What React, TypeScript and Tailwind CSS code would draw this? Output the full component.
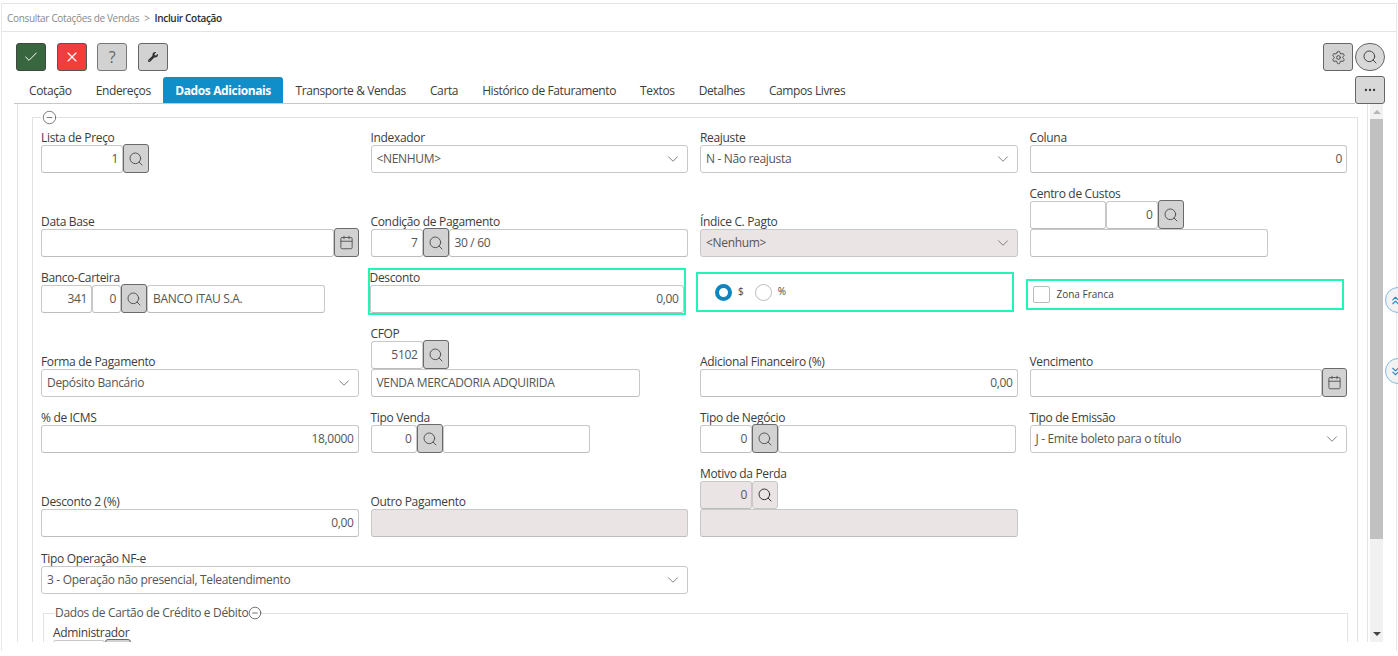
import type { ReactNode } from 'react';
import { Calendar, Check, ChevronDown, ChevronsDown, ChevronsUp, CircleMinus, Ellipsis, Search, Settings, X } from 'lucide-react';
import { FaWrench } from 'react-icons/fa';

const tabs = ['Cotação', 'Endereços', 'Dados Adicionais', 'Transporte & Vendas', 'Carta', 'Histórico de Faturamento', 'Textos', 'Detalhes', 'Campos Livres'];

function Label({ children }: { children: ReactNode }) {
  return <div className="h-[14px] text-[12px] leading-[14px] text-[#3c3c3c] whitespace-nowrap">{children}</div>;
}

function Input({ value, right, disabled, className = 'flex-1' }: { value?: string; right?: boolean; disabled?: boolean; className?: string }) {
  return (
    <div className={`flex h-[28px] items-center rounded-[3px] border border-[#c8c8c8] border-b-[#bcbcbc] pl-[5px] pr-[4px] text-[12px] text-[#555] whitespace-nowrap ${right ? 'justify-end' : ''} ${disabled ? 'bg-[#ebe4e4]' : 'bg-white'} ${className}`}>
      {value}
    </div>
  );
}

function Select({ value, disabled }: { value: string; disabled?: boolean }) {
  return (
    <div className={`flex h-[28px] items-center justify-between rounded-[3px] border border-[#c8c8c8] pl-[5px] pr-[5px] text-[12px] text-[#555] ${disabled ? 'bg-[#ebe4e4]' : 'bg-white'}`}>
      <span>{value}</span>
      <ChevronDown className="h-[18px] w-[18px] text-[#777]" strokeWidth={1.25} />
    </div>
  );
}

function IconBtn({ children, className = 'w-[26px]' }: { children: ReactNode; className?: string }) {
  return (
    <div className={`-my-px flex h-[29px] shrink-0 items-center justify-center rounded-[3px] border-[1.5px] border-[#6a6a6a] bg-[#d2d2d2] text-[#555] ${className}`}>
      {children}
    </div>
  );
}

function SearchBtn({ className }: { className?: string }) {
  return (
    <IconBtn className={className}>
      <Search className="h-[16px] w-[16px]" strokeWidth={1.5} />
    </IconBtn>
  );
}

function CalBtn() {
  return (
    <IconBtn className="w-[25px]">
      <Calendar className="h-[15px] w-[15px]" strokeWidth={1.5} />
    </IconBtn>
  );
}

function ToolBtn({ children, className }: { children: ReactNode; className: string }) {
  return <div className={`flex h-[28px] w-[30px] items-center justify-center rounded-[3px] border-[1.5px] ${className}`}>{children}</div>;
}

export default function App() {
  return (
    <div className="relative h-[656px] w-[1398px] overflow-hidden bg-white pt-[3px] font-['Open_Sans','Noto_Sans',sans-serif] tracking-[-0.33px]">
      <div className="ml-px flex h-[648px] w-[1396px] flex-col overflow-hidden border-x border-t border-[#e4e4e4] border-x-[#e8e8e8]">
        {/* breadcrumb */}
        <div className="flex h-[28px] shrink-0 items-center gap-[5px] border-b border-[#e4e4e4] pl-[5px] pt-[2px] text-[10px]">
          <span className="text-[#8a8a8a]">Consultar Cotações de Vendas</span>
          <span className="text-[#8a8a8a]">&gt;</span>
          <span className="font-semibold text-[#2c2c2c]">Incluir Cotação</span>
        </div>

        {/* toolbar */}
        <div className="flex h-[45px] shrink-0 items-end justify-between pb-[6px] pl-[14px] pr-[11px]">
          <div className="flex gap-[10.5px]">
            <ToolBtn className="border-[#444] bg-[#38663f] text-white">
              <Check className="h-[16px] w-[16px]" strokeWidth={1.5} />
            </ToolBtn>
            <ToolBtn className="border-[#555] bg-[#f23d3d] text-white">
              <X className="h-[16px] w-[16px]" strokeWidth={1.75} />
            </ToolBtn>
            <ToolBtn className="border-[#777] bg-[#d2d2d2] text-[16px] text-[#666]">?</ToolBtn>
            <ToolBtn className="border-[#666] bg-[#d2d2d2] text-[#333]">
              <FaWrench className="h-[10px] w-[10px]" />
            </ToolBtn>
          </div>
          <div className="flex gap-[2px]">
            <ToolBtn className="border-[#666] bg-[#d2d2d2] text-[#444]">
              <Settings className="h-[15px] w-[15px]" strokeWidth={1.5} />
            </ToolBtn>
            <div className="flex h-[28px] w-[30px] items-center justify-center rounded-full border-[1.5px] border-[#666] bg-[#d8d8d8] text-[#444]">
              <Search className="h-[16px] w-[16px]" strokeWidth={1.5} />
            </div>
          </div>
        </div>

        {/* tabs */}
        <div className="flex h-[27px] shrink-0 justify-between pl-[12px] pr-[11px]">
          <div className="flex flex-1 items-stretch border-b border-[#c8c8c8] pl-[3px] tracking-[-0.38px]">
            {tabs.map((t) =>
              t === 'Dados Adicionais' ? (
                <div key={t} className="flex items-center rounded-t-[3px] bg-[#0f8ec9] px-[12.5px] pt-px text-[12px] font-bold text-white">{t}</div>
              ) : (
                <div key={t} className="flex items-center px-[12px] pt-px text-[12px] text-[#3c3c3c]">{t}</div>
              ),
            )}
          </div>
          <div className="-mt-px flex h-[28px] w-[30px] items-center justify-center rounded-[3px] border-[1.5px] border-[#666] bg-[#d8d8d8] text-[#333]">
            <Ellipsis className="h-[14px] w-[14px]" />
          </div>
        </div>

        {/* content */}
        <div className="relative ml-[15px] flex h-[538px] overflow-hidden border-l border-[#e4e4e4]">
          <div className="w-[1349px] shrink-0 pl-[14px] pt-[6px]">
            <fieldset className="w-[1326px] border border-[#e2e2e2] pb-[20px] pl-[8px] pr-[10px]">
              <legend className="ml-0 h-[15px] px-[1px]">
                <CircleMinus className="h-[15px] w-[15px] text-[#444]" strokeWidth={1.1} />
              </legend>
              <div className="grid grid-cols-4 items-end gap-x-[12px] gap-y-[14px] pt-[6px]">
                {/* row 1 */}
                <div>
                  <Label>Lista de Preço</Label>
                  <div className="flex w-[108px]">
                    <Input value="1" right />
                    <SearchBtn />
                  </div>
                </div>
                <div>
                  <Label>Indexador</Label>
                  <Select value="<NENHUM>" />
                </div>
                <div>
                  <Label>Reajuste</Label>
                  <Select value="N - Não reajusta" />
                </div>
                <div>
                  <Label>Coluna</Label>
                  <Input value="0" right />
                </div>

                {/* row 2 */}
                <div>
                  <Label>Data Base</Label>
                  <div className="flex">
                    <Input />
                    <CalBtn />
                  </div>
                </div>
                <div>
                  <Label>Condição de Pagamento</Label>
                  <div className="flex">
                    <Input value="7" right className="w-[52px]" />
                    <SearchBtn />
                    <Input value="30 / 60" />
                  </div>
                </div>
                <div>
                  <Label>Índice C. Pagto</Label>
                  <Select value="<Nenhum>" disabled />
                </div>
                <div>
                  <Label>Centro de Custos</Label>
                  <div className="flex">
                    <Input className="w-[76px]" />
                    <Input value="0" right className="w-[52px]" />
                    <SearchBtn />
                  </div>
                  <Input className="w-[238px]" />
                </div>

                {/* row 3 */}
                <div>
                  <Label>Banco-Carteira</Label>
                  <div className="flex w-[284px]">
                    <Input value="341" right className="w-[51px]" />
                    <Input value="0" right className="w-[29px]" />
                    <SearchBtn />
                    <Input value="BANCO ITAU S.A." />
                  </div>
                </div>
                <div className="relative h-[42px]">
                  <div className="absolute -bottom-[2px] -left-[3px] -top-[3px] right-[2.5px] border-2 border-[#22f5b5]">
                    <div className="h-[15px] text-[12px] leading-[16px] text-[#3c3c3c]">Desconto</div>
                    <Input value="0,00" right />
                  </div>
                </div>
                <div className="relative h-[42px]">
                  <div className="absolute -left-[4px] bottom-px right-[3.5px] top-px flex items-start border-2 border-[#22f5b5] pl-[17px] pt-[10px] text-[10px] tracking-normal text-[#444]">
                    <span className="h-[17px] w-[17px] rounded-full border-[4px] border-[#0f85c0] bg-white" />
                    <span className="ml-[6px] leading-[14px]">$</span>
                    <span className="ml-[11px] h-[17px] w-[17px] rounded-full border border-[#bbb] bg-white" />
                    <span className="ml-[6px] leading-[14px]">%</span>
                  </div>
                </div>
                <div className="relative h-[42px]">
                  <div className="absolute -left-[4px] bottom-[3px] right-[3.5px] top-[8px] flex items-center gap-[7px] border-2 border-[#22f5b5] pl-[5px] text-[10px] tracking-normal text-[#444]">
                    <span className="h-[17px] w-[17px] rounded-[2px] border border-[#bbb] bg-white" />
                    Zona Franca
                  </div>
                </div>

                {/* row 4 */}
                <div>
                  <Label>Forma de Pagamento</Label>
                  <Select value="Depósito Bancário" />
                </div>
                <div>
                  <Label>CFOP</Label>
                  <div className="flex">
                    <Input value="5102" right className="w-[52px]" />
                    <SearchBtn />
                  </div>
                  <Input value="VENDA MERCADORIA ADQUIRIDA" className="w-[269px]" />
                </div>
                <div>
                  <Label>Adicional Financeiro (%)</Label>
                  <Input value="0,00" right />
                </div>
                <div>
                  <Label>Vencimento</Label>
                  <div className="flex">
                    <Input />
                    <CalBtn />
                  </div>
                </div>

                {/* row 5 */}
                <div>
                  <Label>% de ICMS</Label>
                  <Input value="18,0000" right />
                </div>
                <div>
                  <Label>Tipo Venda</Label>
                  <div className="flex w-[219px]">
                    <Input value="0" right className="w-[46px]" />
                    <SearchBtn />
                    <Input />
                  </div>
                </div>
                <div>
                  <Label>Tipo de Negócio</Label>
                  <div className="flex w-[316px]">
                    <Input value="0" right className="w-[52px]" />
                    <SearchBtn />
                    <Input />
                  </div>
                </div>
                <div>
                  <Label>Tipo de Emissão</Label>
                  <Select value="J - Emite boleto para o título" />
                </div>

                {/* row 6 */}
                <div>
                  <Label>Desconto 2 (%)</Label>
                  <Input value="0,00" right />
                </div>
                <div>
                  <Label>Outro Pagamento</Label>
                  <Input disabled />
                </div>
                <div>
                  <Label>Motivo da Perda</Label>
                  <div className="flex">
                    <Input value="0" right disabled className="w-[52px]" />
                    <div className="flex h-[28px] w-[26px] items-center justify-center rounded-[3px] border border-[#c8c8c8] bg-[#ebe4e4] text-[#333]">
                      <Search className="h-[16px] w-[16px]" strokeWidth={1.5} />
                    </div>
                  </div>
                  <Input disabled className="w-full" />
                </div>
                <div />

                {/* row 7 */}
                <div className="col-span-2 mt-px">
                  <Label>Tipo Operação NF-e</Label>
                  <Select value="3 - Operação não presencial, Teleatendimento" />
                </div>
              </div>

              <fieldset className="-mr-px ml-[2px] mt-[12px] border border-[#e2e2e2] pl-[9px]">
                <legend className="ml-[2px] flex items-center text-[12px] leading-[14px] text-[#555]">
                  Dados de Cartão de Crédito e Débito
                  <CircleMinus className="h-[14px] w-[14px] text-[#444]" strokeWidth={1.25} />
                </legend>
                <div className="pt-[6px] text-[12px] leading-[14px] text-[#3c3c3c]">Administrador</div>
                <div className="flex">
                  <Input className="w-[52px]" />
                  <SearchBtn />
                </div>
              </fieldset>
            </fieldset>
          </div>

          {/* scrollbar */}
          <div className="h-[538px] w-[16px] shrink-0 border-l border-[#e4e4e4] pl-[2px]">
            <div className="flex h-full w-[13px] flex-col items-center bg-[#f1f1f1]">
              <div className="flex h-[15px] items-center">
                <span className="h-0 w-0 border-x-[4px] border-b-[4px] border-x-transparent border-b-[#b5b5b5]" />
              </div>
              <div className="h-[420px] w-full bg-[#c1c1c1]" />
              <div className="flex flex-1 items-end pb-[6px]">
                <span className="h-0 w-0 border-x-[4px] border-t-[4px] border-x-transparent border-t-[#444]" />
              </div>
            </div>
          </div>
        </div>
      </div>

      {/* floating side buttons */}
      <div className="absolute left-[1385px] top-[287px] flex h-[26px] w-[26px] items-center justify-center rounded-full border border-[#7fbde0] bg-[#f2f2f2] pr-[6px] text-[#2c86bd]">
        <ChevronsUp className="h-[13px] w-[13px]" />
      </div>
      <div className="absolute left-[1385px] top-[358px] flex h-[26px] w-[26px] items-center justify-center rounded-full border border-[#7fbde0] bg-[#f2f2f2] pr-[6px] text-[#2c86bd]">
        <ChevronsDown className="h-[13px] w-[13px]" />
      </div>
    </div>
  );
}
